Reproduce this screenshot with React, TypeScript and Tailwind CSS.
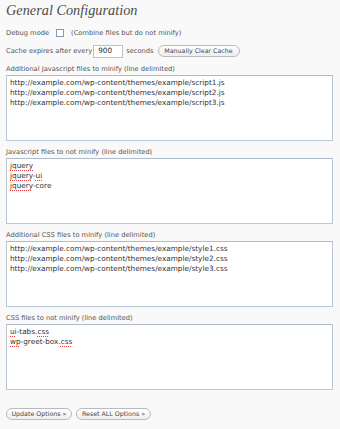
const FONT = "font-['DejaVu_Sans',sans-serif]";

function Misspelt({ children }: { children: React.ReactNode }) {
  return (
    <span className="underline decoration-dotted decoration-[#e23b3b] underline-offset-[2px]">
      {children}
    </span>
  );
}

function Field({ label, lines }: { label: string; lines: React.ReactNode[] }) {
  return (
    <div className="mt-[6px]">
      <div className="flex h-[10px] items-center text-[6.7px] text-[#555]">{label}</div>
      <div className="mt-[1px] h-[66px] w-[327px] border border-[#bcc7d6] border-t-[#aebbcc] bg-white px-[3px] pt-[2px] text-[7.3px] leading-[10px] text-[#333]">
        {lines.map((line, i) => (
          <div key={i} className="whitespace-nowrap">
            {line}
          </div>
        ))}
      </div>
    </div>
  );
}

function PillButton({ children, width }: { children: React.ReactNode; width: string }) {
  return (
    <button
      type="button"
      className={`flex h-[12px] items-center justify-center rounded-full border border-[#bbb] bg-gradient-to-b from-white to-[#eee] text-[6.3px] text-[#464646] ${width}`}
    >
      {children}
    </button>
  );
}

export default function App() {
  return (
    <div className={`min-h-[429px] w-[340px] bg-[#f9f9f9] px-[6px] ${FONT}`}>
      <h1 className="flex h-[22px] items-center font-['Liberation_Serif',serif] text-[14.3px] italic text-[#4a4a4a]">
        General Configuration
      </h1>

      <div className="mt-[4px] flex h-[14px] items-center text-[6.7px] text-[#555]">
        <span>Debug mode</span>
        <span className="ml-[7px] h-[8px] w-[8px] border border-[#7e9cc0] bg-white" />
        <span className="ml-[7px]">(Combine files but do not minify)</span>
      </div>

      <div className="mt-[4px] flex h-[14px] items-center text-[6.7px] text-[#555]">
        <span>Cache expires after every</span>
        <span className="ml-[1px] flex h-[13px] w-[30px] items-center border border-[#b7c3d3] bg-white pl-[4px] text-[7.3px] text-[#333]">
          900
        </span>
        <span className="ml-[3px]">seconds</span>
        <span className="ml-[4px]">
          <PillButton width="w-[82px]">Manually Clear Cache</PillButton>
        </span>
      </div>

      <div className="mt-[1px]">
        <Field
          label="Additional Javascript files to minify (line delimited)"
          lines={[
            "http://example.com/wp-content/themes/example/script1.js",
            "http://example.com/wp-content/themes/example/script2.js",
            "http://example.com/wp-content/themes/example/script3.js",
          ]}
        />
        <Field
          label="Javascript files to not minify (line delimited)"
          lines={[
            <Misspelt>jquery</Misspelt>,
            <>
              <Misspelt>jquery</Misspelt>-<Misspelt>ui</Misspelt>
            </>,
            <>
              <Misspelt>jquery</Misspelt>-core
            </>,
          ]}
        />
        <Field
          label="Additional CSS files to minify (line delimited)"
          lines={[
            "http://example.com/wp-content/themes/example/style1.css",
            "http://example.com/wp-content/themes/example/style2.css",
            "http://example.com/wp-content/themes/example/style3.css",
          ]}
        />
        <Field
          label="CSS files to not minify (line delimited)"
          lines={[
            <>
              <Misspelt>ui</Misspelt>-tabs.<Misspelt>css</Misspelt>
            </>,
            <>
              <Misspelt>wp</Misspelt>-greet-box.<Misspelt>css</Misspelt>
            </>,
          ]}
        />
      </div>

      <div className="mt-[18px] flex gap-[4px]">
        <PillButton width="w-[66px]">Update Options »</PillButton>
        <PillButton width="w-[75px]">Reset ALL Options »</PillButton>
      </div>
    </div>
  );
}
